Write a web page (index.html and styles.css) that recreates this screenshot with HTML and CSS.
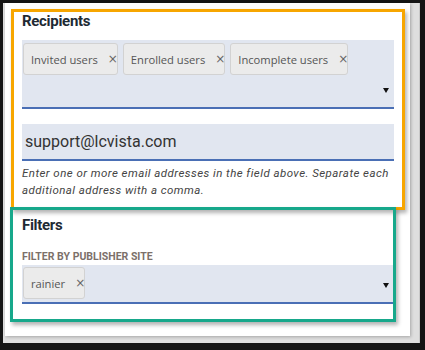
FILE: index.html
```html
<!DOCTYPE html>
<html>
<head>
<meta charset="utf-8">
<link rel="stylesheet" href="styles.css">
</head>
<body>
<div class="frame">
  <div class="card">
    <section class="group">
      <h2 class="title">Recipients</h2>
      <div class="tagselect multi">
        <div class="chips">
          <span class="chip">Invited users<span class="x">×</span></span>
          <span class="chip">Enrolled users<span class="x">×</span></span>
          <span class="chip">Incomplete users<span class="x">×</span></span>
        </div>
        <span class="caret"></span>
      </div>
      <div class="textfield">support@lcvista.com</div>
      <p class="help">Enter one or more email addresses in the field above. Separate each additional address with a comma.</p>
    </section>
    <section class="group filters">
      <h2 class="title">Filters</h2>
      <div class="label">FILTER BY PUBLISHER SITE</div>
      <div class="tagselect single">
        <span class="chip">rainier<span class="x">×</span></span>
        <span class="caret"></span>
      </div>
    </section>
  </div>
  <div class="note note-orange"></div>
  <div class="note note-green"></div>
</div>
</body>
</html>
```
FILE: styles.css
```css
html, body {
  margin: 0;
  padding: 0;
}
body {
  background: #141414;
  width: 425px;
  height: 350px;
  overflow: hidden;
}
.frame {
  position: relative;
  margin: 3px 5px 0 3px;
  height: 340px;
  background: #dedede;
  border-right: 1px solid #c8c8c8;
  box-sizing: border-box;
}
.card {
  margin-left: 2px;
  width: 405px;
  height: 333px;
  background: #fff;
  box-sizing: border-box;
  padding: 9px 16px 0 17px;
  box-shadow: 1px 1px 3px rgba(0,0,0,0.25);
}
.title {
  margin: 0;
  font: 700 15px/18px Roboto, "Liberation Sans", sans-serif;
  letter-spacing: -0.3px;
  color: #1e2a33;
}
.tagselect {
  background: #e1e6f0;
  border-bottom: 2px solid #4a6fb5;
  box-sizing: border-box;
}
.multi {
  margin-top: 10px;
  height: 69px;
  padding: 3px 5px 0 1px;
  display: flex;
  flex-direction: column;
}
.chips {
  display: flex;
  gap: 5px;
}
.chip {
  height: 32px;
  box-sizing: border-box;
  display: flex;
  align-items: center;
  padding: 0 1px 0 7px;
  border: 1px solid #d2d2d2;
  border-radius: 3px;
  background: #ebebeb;
  font: 11.2px "Open Sans", sans-serif;
  color: #555;
}
.x {
  margin-left: 10px;
  width: 8px;
  font: 12px "DejaVu Sans", sans-serif;
  color: #666;
}
.multi .caret {
  align-self: flex-end;
  margin-top: 13px;
}
.caret {
  width: 0;
  height: 0;
  border-left: 3px solid transparent;
  border-right: 3px solid transparent;
  border-top: 5px solid #111;
}
.textfield {
  margin-top: 15px;
  height: 37px;
  box-sizing: border-box;
  padding-left: 3px;
  background: #e1e6f0;
  border-bottom: 2px solid #4a6fb5;
  font: 16px Roboto, sans-serif;
  line-height: 35px;
  color: #333;
}
.help {
  margin: 4px 0 0;
  font: italic 11.5px/17px Roboto, sans-serif;
  letter-spacing: 0.45px;
  color: #444;
}
.filters {
  margin-top: 17px;
}
.label {
  margin-top: 16px;
  font: 700 10.5px/13px Roboto, sans-serif;
  color: #7c706a;
}
.single {
  margin-top: 2px;
  height: 39px;
  padding: 2px 5px 0 1px;
  display: flex;
  align-items: flex-start;
}
.single .caret {
  margin-left: auto;
  margin-top: 16px;
}
.note {
  position: absolute;
  box-sizing: border-box;
  border: 3px solid;
  box-shadow: 2px 3px 4px rgba(0,0,0,0.3);
}
.note-orange {
  left: 8px;
  top: 6px;
  width: 394px;
  height: 201px;
  border-color: #f7a600;
}
.note-green {
  left: 7px;
  top: 204px;
  width: 386px;
  height: 115px;
  border-color: #17a88b;
}
```
